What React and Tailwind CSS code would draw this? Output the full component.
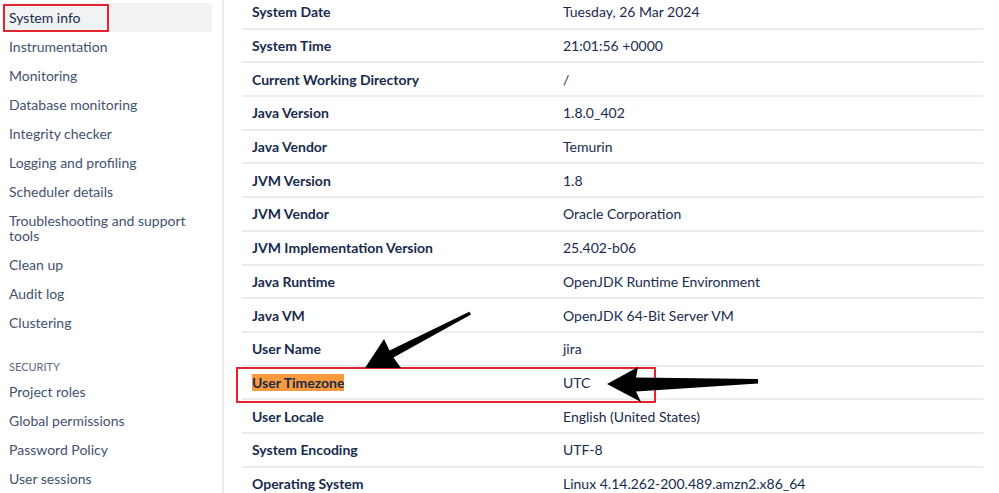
import React from "react";

const navTop = [
  "System info",
  "Instrumentation",
  "Monitoring",
  "Database monitoring",
  "Integrity checker",
  "Logging and profiling",
  "Scheduler details",
  "Troubleshooting and support tools",
  "Clean up",
  "Audit log",
  "Clustering",
];
const navSec = ["Project roles", "Global permissions", "Password Policy", "User sessions"];

const rows = [
  ["System Date", "Tuesday, 26 Mar 2024"],
  ["System Time", "21:01:56 +0000"],
  ["Current Working Directory", "/"],
  ["Java Version", "1.8.0_402"],
  ["Java Vendor", "Temurin"],
  ["JVM Version", "1.8"],
  ["JVM Vendor", "Oracle Corporation"],
  ["JVM Implementation Version", "25.402-b06"],
  ["Java Runtime", "OpenJDK Runtime Environment"],
  ["Java VM", "OpenJDK 64-Bit Server VM"],
  ["User Name", "jira"],
  ["User Timezone", "UTC"],
  ["User Locale", "English (United States)"],
  ["System Encoding", "UTF-8"],
  ["Operating System", "Linux 4.14.262-200.489.amzn2.x86_64"],
];

export default function App() {
  return (
    <div
      className="relative flex w-[999px] h-[493px] overflow-hidden bg-white text-[14px]"
      style={{ fontFamily: "Lato, 'Open Sans', sans-serif" }}
    >
      <aside className="w-[224px] shrink-0 border-r-2 border-[#ebecf0] pt-[3px] pl-[2px] pr-[10px]">
        {navTop.map((n, i) => (
          <div
            key={n}
            className={
              i === 0
                ? "px-[7px] py-[7px] leading-[15px] rounded-[3px] bg-[#f1f2f4] text-[#172b4d]"
                : "px-[7px] py-[7px] leading-[15px] text-[#42526e]"
            }
          >
            {n}
          </div>
        ))}
        <div className="px-[7px] pt-[22px] pb-[2px] text-[11px] leading-[16px] text-[#5e6c84] uppercase">
          Security
        </div>
        {navSec.map((n) => (
          <div key={n} className="px-[7px] py-[7px] leading-[15px] text-[#42526e]">
            {n}
          </div>
        ))}
      </aside>
      <main className="flex-1 pl-[18px] pr-[16px]">
        <div className="-mt-[4px]">
          {rows.map(([k, v]) => (
            <div key={k} className="flex items-center h-[33.7px] border-b-2 border-[#ebecf0] text-[#172b4d]">
              <div className="w-[321px] shrink-0 pl-[10px] font-bold">
                {k === "User Timezone" ? (
                  <span className="inline-block bg-[#f99a3e] leading-[17px]">{k}</span>
                ) : (
                  k
                )}
              </div>
              <div>{v}</div>
            </div>
          ))}
        </div>
      </main>

      <div className="absolute left-[3px] top-[4px] w-[106px] h-[28px] border-2 border-[#e3262d]" />
      <div className="absolute left-[236px] top-[367px] w-[420px] h-[36px] border-2 border-[#e3262d]" />

      <svg className="absolute left-0 top-0 pointer-events-none" width="999" height="493" viewBox="0 0 999 493">
        <polygon
          points="365,368 384,339 389.5,350.5 469.3,311.7 471,314.5 393.5,357.6 401,368"
          fill="#000"
          strokeLinejoin="round"
        />
        <polygon
          points="607,384 638,367 636,377.5 758,379 758,383.5 636,391.5 641,402"
          fill="#000"
          strokeLinejoin="round"
        />
      </svg>
    </div>
  );
}
